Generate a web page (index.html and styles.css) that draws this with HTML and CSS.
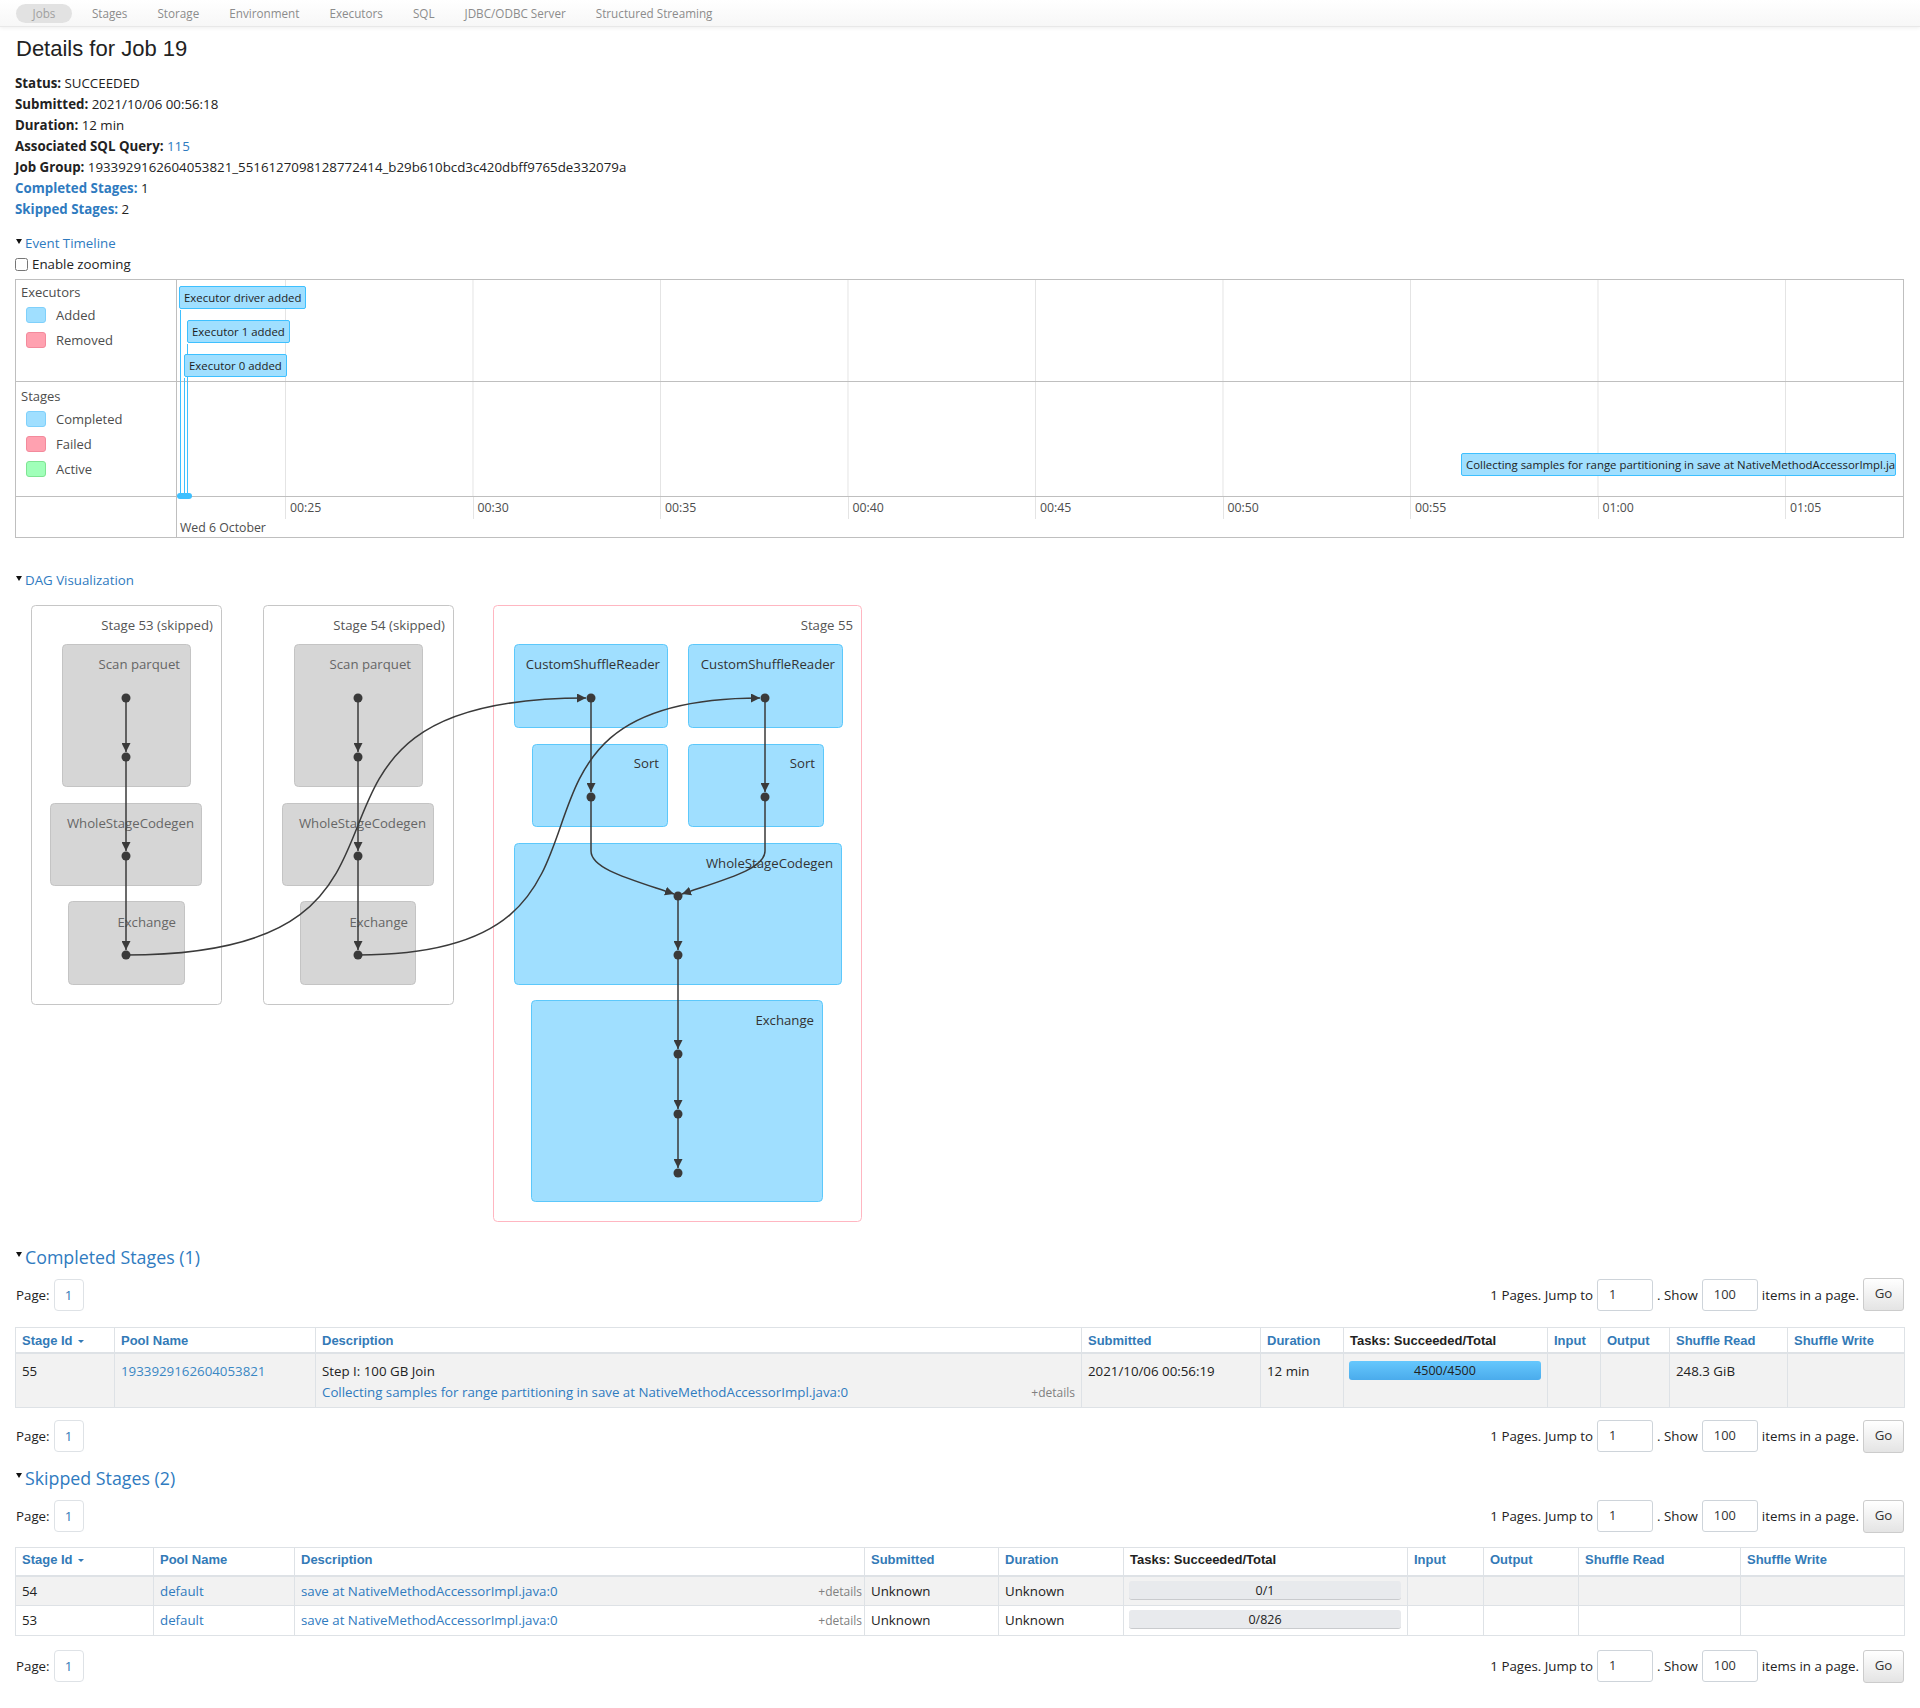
FILE: index.html
```html
<!DOCTYPE html>
<html lang="en">
<head>
<meta charset="utf-8">
<title>Details for Job 19</title>
<link rel="stylesheet" href="styles.css">
</head>
<body>
<nav class="navbar">
  <ul class="nav">
    <li class="active"><a href="#">Jobs</a></li>
    <li><a href="#">Stages</a></li>
    <li><a href="#">Storage</a></li>
    <li><a href="#">Environment</a></li>
    <li><a href="#">Executors</a></li>
    <li><a href="#">SQL</a></li>
    <li><a href="#">JDBC/ODBC Server</a></li>
    <li><a href="#">Structured Streaming</a></li>
  </ul>
</nav>

<main class="main">
  <h3 class="title">Details for Job 19</h3>
  <ul class="summary">
    <li><strong>Status:</strong> SUCCEEDED</li>
    <li><strong>Submitted:</strong> 2021/10/06 00:56:18</li>
    <li><strong>Duration:</strong> 12 min</li>
    <li><strong>Associated SQL Query:</strong> <a href="#">115</a></li>
    <li><strong>Job Group:</strong> 1933929162604053821_5516127098128772414_b29b610bcd3c420dbff9765de332079a</li>
    <li><a href="#"><strong>Completed Stages:</strong></a> 1</li>
    <li><a href="#"><strong>Skipped Stages:</strong></a> 2</li>
  </ul>

  <div class="toggle"><span class="caret"></span><a href="#">Event Timeline</a></div>
  <label class="zoom-toggle"><input type="checkbox" class="zoom-check">Enable zooming</label>

  <div class="timeline">
    <div class="tl-legend tl-legend-exec">
      <div class="legend-title">Executors</div>
      <div class="legend-row"><span class="swatch sw-blue"></span>Added</div>
      <div class="legend-row"><span class="swatch sw-red"></span>Removed</div>
    </div>
    <div class="tl-lane tl-lane-exec"></div>
    <div class="tl-legend tl-legend-stage">
      <div class="legend-title">Stages</div>
      <div class="legend-row"><span class="swatch sw-blue"></span>Completed</div>
      <div class="legend-row"><span class="swatch sw-red"></span>Failed</div>
      <div class="legend-row"><span class="swatch sw-green"></span>Active</div>
    </div>
    <div class="tl-lane tl-lane-stage"></div>
    <div class="tl-legend tl-legend-axis"></div>
    <div class="tl-axis">
      <div class="ticks">
        <span class="tick">00:25</span><span class="tick">00:30</span><span class="tick">00:35</span><span class="tick">00:40</span><span class="tick">00:45</span><span class="tick">00:50</span><span class="tick">00:55</span><span class="tick">01:00</span><span class="tick">01:05</span>
      </div>
      <div class="axis-date">Wed 6 October</div>
    </div>
    <div class="tl-overlay">
      <span class="tl-line" style="left:3px;top:30px;height:186px"></span>
      <span class="tl-line" style="left:10px;top:64px;height:152px"></span>
      <span class="tl-line" style="left:7px;top:98px;height:118px"></span>
      <div class="tl-item" style="left:2px;top:6px;width:127px">Executor driver added</div>
      <div class="tl-item" style="left:10px;top:40px;width:103px">Executor 1 added</div>
      <div class="tl-item" style="left:7px;top:74px;width:103px">Executor 0 added</div>
      <div class="tl-item" style="left:1284px;top:173px;width:435px">Collecting samples for range partitioning in save at NativeMethodAccessorImpl.java:0</div>
      <span class="tl-blob" style="left:0;top:213px;width:15px"></span>
    </div>
  </div>

  <div class="toggle toggle-dag"><span class="caret"></span><a href="#">DAG Visualization</a></div>

  <svg class="dag" width="860" height="630" viewBox="15 595 860 630" xmlns="http://www.w3.org/2000/svg">
    <defs>
      <marker id="arr" viewBox="0 0 10 10" refX="10" refY="5" markerWidth="9" markerHeight="9" markerUnits="userSpaceOnUse" orient="auto">
        <path d="M0,0 L10,5 L0,10 z" fill="#3a3a3a"/>
      </marker>
    </defs>
    <!-- clusters -->
    <rect class="cl-skip" x="31.5" y="604.5" width="190" height="399" rx="4"/>
    <rect class="cl-skip" x="263.5" y="604.5" width="190" height="399" rx="4"/>
    <rect class="cl-run" x="493.5" y="604.5" width="368" height="616" rx="4"/>
    <text class="cl-label" x="213" y="629">Stage 53 (skipped)</text>
    <text class="cl-label" x="445" y="629">Stage 54 (skipped)</text>
    <text class="cl-label" x="853" y="629">Stage 55</text>
    <!-- nodes -->
    <rect class="nd-gray" x="62.5" y="643.5" width="128" height="142" rx="4"/>
    <rect class="nd-gray" x="50.5" y="802.5" width="151" height="82" rx="4"/>
    <rect class="nd-gray" x="68.5" y="900.5" width="116" height="83" rx="4"/>
    <rect class="nd-gray" x="294.5" y="643.5" width="128" height="142" rx="4"/>
    <rect class="nd-gray" x="282.5" y="802.5" width="151" height="82" rx="4"/>
    <rect class="nd-gray" x="300.5" y="900.5" width="115" height="83" rx="4"/>
    <rect class="nd-blue" x="514.5" y="643.5" width="153" height="83" rx="4"/>
    <rect class="nd-blue" x="688.5" y="643.5" width="154" height="83" rx="4"/>
    <rect class="nd-blue" x="532.5" y="743.5" width="135" height="82" rx="4"/>
    <rect class="nd-blue" x="688.5" y="743.5" width="135" height="82" rx="4"/>
    <rect class="nd-blue" x="514.5" y="842.5" width="327" height="141" rx="4"/>
    <rect class="nd-blue" x="531.5" y="999.5" width="291" height="201" rx="4"/>
    <!-- labels -->
    <text class="nd-label-g" x="180" y="668">Scan parquet</text>
    <text class="nd-label-g" x="194" y="827">WholeStageCodegen</text>
    <text class="nd-label-g" x="176" y="926">Exchange</text>
    <text class="nd-label-g" x="411" y="668">Scan parquet</text>
    <text class="nd-label-g" x="426" y="827">WholeStageCodegen</text>
    <text class="nd-label-g" x="408" y="926">Exchange</text>
    <text class="nd-label-b" x="660" y="668">CustomShuffleReader</text>
    <text class="nd-label-b" x="835" y="668">CustomShuffleReader</text>
    <text class="nd-label-b" x="659" y="767">Sort</text>
    <text class="nd-label-b" x="815" y="767">Sort</text>
    <text class="nd-label-b" x="833" y="867">WholeStageCodegen</text>
    <text class="nd-label-b" x="814" y="1024">Exchange</text>
    <!-- edges -->
    <g class="edges">
      <path d="M126,697 L126,751"/>
      <path d="M126,756 L126,850"/>
      <path d="M126,855 L126,949"/>
      <path d="M358,697 L358,751"/>
      <path d="M358,756 L358,850"/>
      <path d="M358,855 L358,949"/>
      <path d="M126,954 C486,954 230,697 586,697"/>
      <path d="M358,954 C673,954 449,697 760,697"/>
      <path d="M591,697 L591,791"/>
      <path d="M765,697 L765,791"/>
      <path d="M591,796 L591,850 C591,868 630,878 674,893"/>
      <path d="M765,796 L765,850 C765,868 726,878 682,893"/>
      <path d="M678,895 L678,949"/>
      <path d="M678,954 L678,1048"/>
      <path d="M678,1053 L678,1108"/>
      <path d="M678,1113 L678,1167"/>
    </g>
    <g class="dots">
      <circle cx="126" cy="697" r="4.5"/><circle cx="126" cy="756" r="4.5"/><circle cx="126" cy="855" r="4.5"/><circle cx="126" cy="954" r="4.5"/>
      <circle cx="358" cy="697" r="4.5"/><circle cx="358" cy="756" r="4.5"/><circle cx="358" cy="855" r="4.5"/><circle cx="358" cy="954" r="4.5"/>
      <circle cx="591" cy="697" r="4.5"/><circle cx="765" cy="697" r="4.5"/>
      <circle cx="591" cy="796" r="4.5"/><circle cx="765" cy="796" r="4.5"/>
      <circle cx="678" cy="895" r="4.5"/><circle cx="678" cy="954" r="4.5"/>
      <circle cx="678" cy="1053" r="4.5"/><circle cx="678" cy="1113" r="4.5"/><circle cx="678" cy="1172" r="4.5"/>
    </g>
  </svg>

  <h4 class="section"><span class="caret caret-lg"></span><a href="#">Completed Stages (1)</a></h4>
  <div class="pager">
    <div class="pager-left">Page: <span class="page-box">1</span></div>
    <div class="pager-right">1 Pages. Jump to <input class="pg-input" type="text" value="1"> . Show <input class="pg-input" type="text" value="100"> items in a page. <button class="go">Go</button></div>
  </div>
  <table class="stage-table completed">
    <colgroup>
      <col class="c1"><col class="c2"><col class="c3"><col class="c4"><col class="c5"><col class="c6"><col class="c7"><col class="c8"><col class="c9"><col class="c10">
    </colgroup>
    <thead>
      <tr>
        <th>Stage Id <span class="sort"></span></th><th>Pool Name</th><th>Description</th><th>Submitted</th><th>Duration</th><th class="dark">Tasks: Succeeded/Total</th><th>Input</th><th>Output</th><th>Shuffle Read</th><th>Shuffle Write</th>
      </tr>
    </thead>
    <tbody>
      <tr class="striped">
        <td>55</td>
        <td><a href="#" class="pool">1933929162604053821</a></td>
        <td>
          <div>Step I: 100 GB Join</div>
          <div class="desc-line"><a href="#">Collecting samples for range partitioning in save at NativeMethodAccessorImpl.java:0</a><span class="details">+details</span></div>
        </td>
        <td>2021/10/06 00:56:19</td>
        <td>12 min</td>
        <td><div class="progress done">4500/4500</div></td>
        <td></td>
        <td></td>
        <td>248.3 GiB</td>
        <td></td>
      </tr>
    </tbody>
  </table>
  <div class="pager pager-after">
    <div class="pager-left">Page: <span class="page-box">1</span></div>
    <div class="pager-right">1 Pages. Jump to <input class="pg-input" type="text" value="1"> . Show <input class="pg-input" type="text" value="100"> items in a page. <button class="go">Go</button></div>
  </div>

  <h4 class="section section-skipped"><span class="caret caret-lg"></span><a href="#">Skipped Stages (2)</a></h4>
  <div class="pager pager-skip">
    <div class="pager-left">Page: <span class="page-box">1</span></div>
    <div class="pager-right">1 Pages. Jump to <input class="pg-input" type="text" value="1"> . Show <input class="pg-input" type="text" value="100"> items in a page. <button class="go">Go</button></div>
  </div>
  <table class="stage-table skipped">
    <colgroup>
      <col class="s1"><col class="s2"><col class="s3"><col class="s4"><col class="s5"><col class="s6"><col class="s7"><col class="s8"><col class="s9"><col class="s10">
    </colgroup>
    <thead>
      <tr>
        <th>Stage Id <span class="sort"></span></th><th>Pool Name</th><th>Description</th><th>Submitted</th><th>Duration</th><th class="dark">Tasks: Succeeded/Total</th><th>Input</th><th>Output</th><th>Shuffle Read</th><th>Shuffle Write</th>
      </tr>
    </thead>
    <tbody>
      <tr class="striped">
        <td>54</td>
        <td><a href="#">default</a></td>
        <td class="desc-inline"><a href="#">save at NativeMethodAccessorImpl.java:0</a><span class="details">+details</span></td>
        <td>Unknown</td>
        <td>Unknown</td>
        <td><div class="progress empty">0/1</div></td>
        <td></td><td></td><td></td><td></td>
      </tr>
      <tr>
        <td>53</td>
        <td><a href="#">default</a></td>
        <td class="desc-inline"><a href="#">save at NativeMethodAccessorImpl.java:0</a><span class="details">+details</span></td>
        <td>Unknown</td>
        <td>Unknown</td>
        <td><div class="progress empty">0/826</div></td>
        <td></td><td></td><td></td><td></td>
      </tr>
    </tbody>
  </table>
  <div class="pager pager-last">
    <div class="pager-left">Page: <span class="page-box">1</span></div>
    <div class="pager-right">1 Pages. Jump to <input class="pg-input" type="text" value="1"> . Show <input class="pg-input" type="text" value="100"> items in a page. <button class="go">Go</button></div>
  </div>
</main>
</body>
</html>
```

FILE: styles.css
```css
* { box-sizing: border-box; }

body {
  margin: 0;
  font-family: "Open Sans", "Noto Sans", sans-serif;
  font-size: 13.3px;
  color: #222;
  background: #fff;
}

a { color: #2f7bbf; text-decoration: none; }

/* ---------- navbar ---------- */
.navbar {
  height: 27px;
  background: linear-gradient(#ffffff, #f7f7f7);
  border-bottom: 1px solid #e8e8e8;
  box-shadow: 0 1px 4px rgba(0, 0, 0, 0.07);
  display: flex;
  align-items: center;
  padding-left: 16px;
}
.nav {
  display: flex;
  list-style: none;
  margin: 0;
  padding: 0;
}
.nav a {
  display: block;
  padding: 0 15px;
  height: 19px;
  line-height: 19px;
  font-size: 11.7px;
  color: #8c8c8c;
  border-radius: 10px;
}
.nav .active { margin-right: 5px; }
.nav .active a {
  padding: 0 16.5px;
  background: #e2e2e2;
  color: #a0a0a0;
}

/* ---------- main ---------- */
.main { padding: 0 16px 0 15px; }

.title {
  font-family: "Liberation Sans", Arial, sans-serif;
  font-weight: normal;
  font-size: 22px;
  line-height: 24px;
  margin: 10px 0 0 1px;
  color: #222;
}

.summary {
  list-style: none;
  margin: 11.5px 0 0;
  padding: 0;
  line-height: 21px;
}
.summary strong { font-weight: 700; }

.toggle {
  margin-top: 13px;
  line-height: 21px;
  display: flex;
  align-items: flex-start;
}
.caret {
  display: inline-block;
  flex: 0 0 auto;
  width: 0;
  height: 0;
  border-left: 3.5px solid transparent;
  border-right: 3.5px solid transparent;
  border-top: 5px solid #111;
  margin: 6px 3px 0 1px;
}
.toggle-dag { margin-top: 32px; }

.zoom-toggle {
  display: flex;
  align-items: center;
  line-height: 21px;
}
.zoom-check {
  width: 13px;
  height: 13px;
  margin: 0 4px 0 0;
}

/* ---------- timeline ---------- */
.timeline {
  margin-top: 4px;
  border: 1px solid #bfbfbf;
  display: grid;
  grid-template-columns: 161px minmax(0, 1fr);
  grid-template-rows: 102px 115px 40px;
  overflow: hidden;
}
.tl-legend {
  border-right: 1px solid #bfbfbf;
  border-bottom: 1px solid #bfbfbf;
  padding: 1px 0 0 5px;
  font-size: 13px;
  color: #4d4d4d;
}
.tl-legend-exec { grid-column: 1; grid-row: 1; }
.tl-legend-stage { grid-column: 1; grid-row: 2; padding-top: 3px; }
.tl-legend-axis { grid-column: 1; grid-row: 3; border-bottom: 0; }
.legend-title { line-height: 22px; }
.legend-row {
  display: flex;
  align-items: center;
  height: 25px;
  padding-left: 5px;
}
.swatch {
  width: 20px;
  height: 16px;
  border-radius: 3px;
  margin-right: 10px;
  border: 1px solid;
}
.sw-blue { background: #a0dfff; border-color: #7fd0fb; }
.sw-red { background: #ffa1b0; border-color: #f38a9c; }
.sw-green { background: #a0ffb9; border-color: #7fe493; }

.tl-lane {
  border-bottom: 1px solid #bfbfbf;
  background-image: linear-gradient(to right, #e4e4e4 0, #e4e4e4 1px, transparent 1px);
  background-size: 187.5px 100%;
  background-position: 108px 0;
  background-repeat: repeat-x;
}
.tl-lane-exec { grid-column: 2; grid-row: 1; }
.tl-lane-stage { grid-column: 2; grid-row: 2; }

.tl-axis {
  grid-column: 2;
  grid-row: 3;
  font-size: 12.3px;
  color: #4d4d4d;
  overflow: hidden;
}
.ticks { display: flex; padding-left: 108px; }
.tick {
  flex: 0 0 187.5px;
  height: 22px;
  line-height: 18px;
  padding: 2px 0 0 4px;
  border-left: 1px solid #e4e4e4;
}
.axis-date { line-height: 18px; padding-left: 3px; margin-top: 0; }

.tl-overlay {
  grid-column: 2;
  grid-row: 1 / 3;
  position: relative;
}
.tl-item {
  position: absolute;
  height: 23px;
  line-height: 21px;
  padding: 0 4px;
  background: #a0dfff;
  border: 1px solid #3ec0ff;
  border-radius: 2px;
  font-size: 11.4px;
  color: #1d1d1d;
  white-space: nowrap;
  overflow: hidden;
}
.tl-line {
  position: absolute;
  width: 1px;
  background: #3ec0ff;
}
.tl-blob {
  position: absolute;
  height: 6px;
  border-radius: 3px;
  background: #3ec0ff;
}

/* ---------- DAG ---------- */
.dag {
  display: block;
  margin: 5px 0 0 0;
}
.cl-skip { fill: #fff; stroke: #c6c6c6; stroke-width: 1; }
.cl-run { fill: #fff; stroke: #ffb6c1; stroke-width: 1; }
.cl-label {
  font-family: "Open Sans", sans-serif;
  font-size: 13.2px;
  fill: #555;
  text-anchor: end;
}
.nd-gray { fill: #d6d6d6; stroke: #c4c4c4; stroke-width: 1; }
.nd-blue { fill: #a0dfff; stroke: #5cc8fb; stroke-width: 1; }
.nd-label-g, .nd-label-b {
  font-family: "Open Sans", sans-serif;
  font-size: 13.2px;
  text-anchor: end;
}
.nd-label-g { fill: #666; }
.nd-label-b { fill: #333; }
.edges path {
  fill: none;
  stroke: #3a3a3a;
  stroke-width: 1.5;
  marker-end: url(#arr);
}
.dots circle { fill: #3a3a3a; }

/* ---------- stage sections ---------- */
.section {
  margin: 20.5px 0 0;
  font-size: 17.8px;
  font-weight: normal;
  line-height: 22px;
  display: flex;
  align-items: flex-start;
}
.section .caret { margin-top: 6px; }
.section-skipped { margin-top: 14px; }

.pager {
  display: flex;
  justify-content: space-between;
  align-items: center;
  height: 33px;
  margin-top: 10px;
}
.pager-after { margin-top: 12px; }
.pager-skip { margin-top: 11px; }
.pager-last { margin-top: 14px; }
.pager-left { display: flex; align-items: center; padding-left: 1px; }
.page-box {
  display: inline-flex;
  align-items: center;
  justify-content: center;
  width: 30px;
  height: 32px;
  margin-left: 4px;
  border: 1px solid #dee2e6;
  border-radius: 4px;
  color: #337ab7;
}
.pager-right { display: flex; align-items: center; gap: 4px; }
.pg-input {
  width: 56px;
  height: 32px;
  border: 1px solid #ced4da;
  border-radius: 3px;
  padding: 0 0 2px 11px;
  font-family: "Open Sans", sans-serif;
  font-size: 12.8px;
  color: #333;
}
.go {
  width: 41px;
  height: 33px;
  border: 1px solid #cccccc;
  border-radius: 3px;
  background: linear-gradient(#ffffff, #e4e4e4);
  font-family: "Open Sans", sans-serif;
  font-size: 13.3px;
  color: #333;
  padding: 0 0 3px;
}

.stage-table {
  width: 100%;
  margin-top: 15.5px;
  border-collapse: collapse;
  table-layout: fixed;
  border: 1px solid #dee2e6;
}
.stage-table.skipped { margin-top: 14.5px; }
.stage-table th {
  font-family: "Liberation Sans", Arial, sans-serif;
  font-weight: bold;
  font-size: 13px;
  color: #337ab7;
  text-align: left;
  padding: 5px 6px 3px;
  height: 26px;
  border-left: 1px solid #dee2e6;
  border-bottom: 2px solid #dee2e6;
  white-space: nowrap;
}
.stage-table th.dark { color: #222; }
.stage-table td {
  padding: 4px 6px;
  line-height: 21px;
  vertical-align: top;
  border-left: 1px solid #dee2e6;
  border-top: 1px solid #dee2e6;
}
.stage-table tr.striped td { background: #f2f2f2; }
.completed td { padding-top: 7px; padding-bottom: 3.5px; }
.skipped th { height: 28px; padding-top: 2px; padding-bottom: 6px; }
.skipped td { padding-top: 4px; padding-bottom: 3.5px; }

.sort {
  display: inline-block;
  width: 0;
  height: 0;
  border-left: 3px solid transparent;
  border-right: 3px solid transparent;
  border-top: 3px solid #337ab7;
  vertical-align: middle;
  margin-left: 2px;
}

.c1 { width: 99px; } .c2 { width: 201px; } .c3 { width: 766px; } .c4 { width: 179px; }
.c5 { width: 83px; } .c6 { width: 204px; } .c7 { width: 53px; } .c8 { width: 69px; }
.c9 { width: 118px; } .c10 { width: 117px; }

.s1 { width: 138px; } .s2 { width: 141px; } .s3 { width: 570px; } .s4 { width: 134px; }
.s5 { width: 125px; } .s6 { width: 284px; } .s7 { width: 76px; } .s8 { width: 95px; }
.s9 { width: 162px; } .s10 { width: 164px; }

.pool { color: #3a87c4; }
.desc-line { display: flex; justify-content: space-between; }
.desc-inline .details { float: right; margin-right: -4px; }
.details { font-size: 12px; color: #808080; }

.progress {
  height: 19px;
  line-height: 19px;
  border-radius: 3px;
  text-align: center;
  font-size: 12.5px;
  color: #222;
  margin: 0 0 0 -1px;
}
.progress.done {
  background: linear-gradient(#66c8fd, #4aabec);
}
.progress.empty {
  background: #e8eaed;
  border-bottom: 1px solid #c9cbce;
}
```
